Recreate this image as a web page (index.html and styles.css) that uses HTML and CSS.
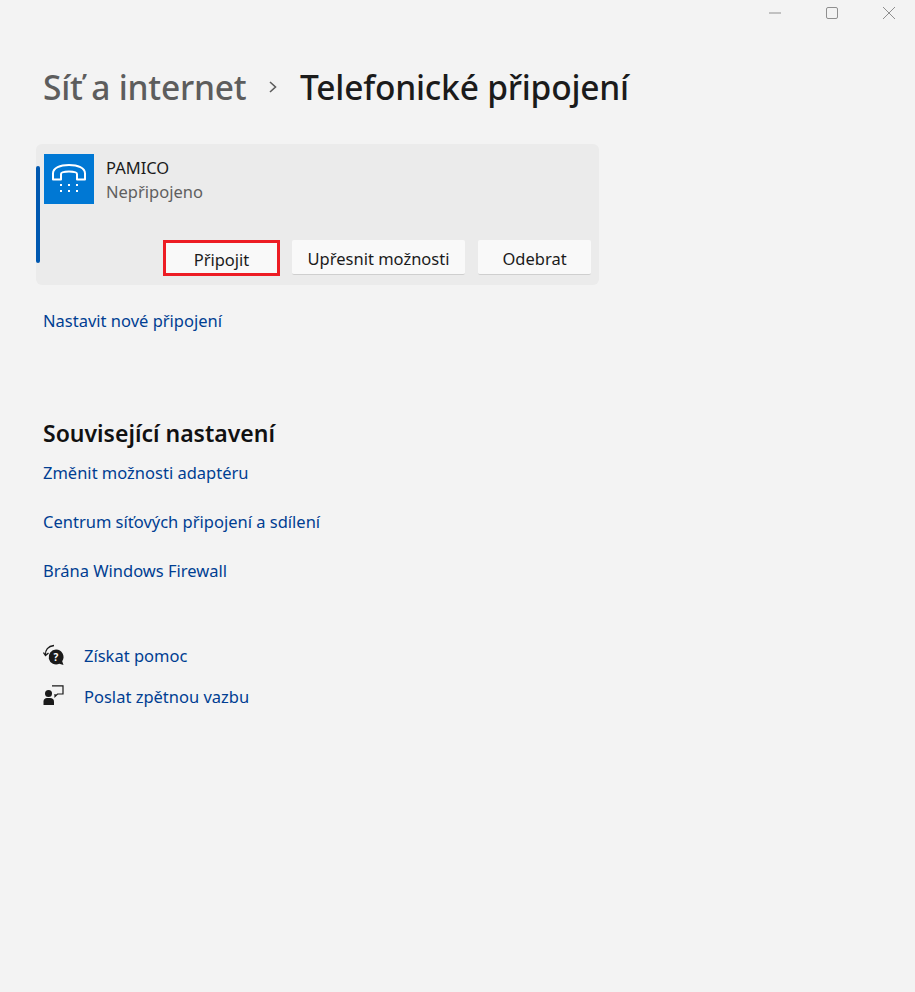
FILE: index.html
```html
<!DOCTYPE html>
<html lang="cs">
<head>
<meta charset="utf-8">
<title>Telefonické připojení</title>
<link rel="stylesheet" href="styles.css">
</head>
<body>
<div class="titlebar">
  <svg class="win-icon" width="14" height="14" viewBox="0 0 14 14"><path d="M1 7h12" stroke="#8f8f8f" fill="none"/></svg>
  <svg class="win-icon" width="14" height="14" viewBox="0 0 14 14"><rect x="1.500" y="1.500" width="11" height="11" rx="1.500" stroke="#8f8f8f" fill="none"/></svg>
  <svg class="win-icon" width="14" height="14" viewBox="0 0 14 14"><path d="M1 1l12 12M13 1L1 13" stroke="#8f8f8f" fill="none"/></svg>
</div>
<main class="page">
  <h1 class="crumbs">
    <span class="crumb-parent">Síť a internet</span>
    <svg class="crumb-sep" width="10" height="14" viewBox="0 0 10 14"><path d="M2 2l5.500 5L2 12" stroke="#5c5c5c" stroke-width="1.600" fill="none"/></svg>
    <span class="crumb-current">Telefonické připojení</span>
  </h1>
  <section class="card">
    <span class="accent"></span>
    <div class="card-head">
      <div class="tile">
        <svg width="50" height="50" viewBox="0 0 50 50">
          <path d="M9 25.500v-6C9 14 16 11 25 11s16 3 16 8.500v6h-8v-5.500c0-1.500-3-2.500-8-2.500s-8 1-8 2.500v5.500z" fill="none" stroke="#fff" stroke-width="2" stroke-linejoin="round"/>
          <g fill="#fff">
            <rect x="16" y="30" width="2" height="2"/><rect x="24" y="30" width="2" height="2"/><rect x="32" y="30" width="2" height="2"/>
            <rect x="16" y="36" width="2" height="2"/><rect x="24" y="36" width="2" height="2"/><rect x="32" y="36" width="2" height="2"/>
          </g>
        </svg>
      </div>
      <div class="card-text">
        <div class="card-name">PAMICO</div>
        <div class="card-status">Nepřipojeno</div>
      </div>
    </div>
    <div class="card-actions">
      <button class="btn btn-connect">Připojit</button>
      <button class="btn btn-advanced">Upřesnit možnosti</button>
      <button class="btn btn-remove">Odebrat</button>
    </div>
  </section>
  <a class="link new-link" href="#">Nastavit nové připojení</a>
  <h2 class="section-title">Související nastavení</h2>
  <nav class="related">
    <a class="link" href="#">Změnit možnosti adaptéru</a>
    <a class="link" href="#">Centrum síťových připojení a sdílení</a>
    <a class="link" href="#">Brána Windows Firewall</a>
  </nav>
  <div class="help">
    <div class="help-row">
      <svg class="help-icon" width="24" height="24" viewBox="0 0 24 24">
        <path d="M2.500 11C2 6 5 2 11 1.500" fill="none" stroke="#1a1a1a" stroke-width="1.300"/>
        <path d="M.5 8.500l2 3 3-2.500" fill="none" stroke="#1a1a1a" stroke-width="1.300"/>
        <path d="M13 5.500a7.500 7.500 0 1 0 3.300 14.300l4.200 1.200-1.300-3.800A7.500 7.500 0 0 0 13 5.500z" fill="#1a1a1a"/>
        <text class="help-q" x="13" y="16.500" text-anchor="middle">?</text>
      </svg>
      <a class="link" href="#">Získat pomoc</a>
    </div>
    <div class="help-row">
      <svg class="help-icon" width="24" height="24" viewBox="0 0 24 24">
        <circle cx="5.500" cy="8.500" r="3.500" fill="#1a1a1a"/>
        <path d="M.5 20v-3.500c0-2 1.500-3.500 3.500-3.500h3c2.500 0 4 1.500 4 3.500V20z" fill="#1a1a1a"/>
        <path d="M9 .8h11v8.200h-5.500l-2.500 2.500V9" fill="none" stroke="#1a1a1a" stroke-width="1.200"/>
      </svg>
      <a class="link" href="#">Poslat zpětnou vazbu</a>
    </div>
  </div>
</main>
</body>
</html>
```
FILE: styles.css
```css
* { box-sizing: border-box; }
html, body { margin: 0; height: 100%; }
body {
  background: #f3f3f3;
  color: #1b1b1b;
  font-family: "Noto Sans", "Open Sans", sans-serif;
  font-size: 16.500px;
  overflow: hidden;
}
.titlebar {
  display: flex;
  justify-content: flex-end;
  gap: 43px;
  height: 28px;
  padding: 6px 19px 0 0;
}
.win-icon { display: block; }
.page { padding: 0 0 0 36px; }
.crumbs {
  display: flex;
  align-items: center;
  height: 60px;
  margin: 29px 0 27px 7px;
  font-size: 33.500px;
  font-weight: 500;
  white-space: nowrap;
}
.crumb-parent { color: #5d5d5d; width: 225px; letter-spacing: -.2px; }
.crumb-sep { margin-right: 22px; }
.crumb-current { color: #1b1b1b; letter-spacing: -.2px; }
.card {
  position: relative;
  width: 563px;
  height: 141px;
  background: #ebebeb;
  border-radius: 6px;
  padding: 10px 8px;
}
.accent {
  position: absolute;
  left: 0;
  top: 22px;
  width: 4px;
  height: 97px;
  background: #0058b0;
  border-radius: 2px;
}
.card-head { display: flex; gap: 12px; height: 86px; }
.tile { width: 50px; height: 50px; background: #0078d4; }
.tile svg { display: block; }
.card-text { line-height: 24px; padding-top: 2px; }
.card-name { color: #1b1b1b; }
.card-status { color: #5f5f5f; }
.card-actions { display: flex; justify-content: flex-end; gap: 13px; }
.btn {
  height: 35px;
  background: #f9f9f9;
  border: 0;
  border-bottom: 1px solid #cfcfcf;
  border-radius: 2px;
  font: inherit;
  color: #1b1b1b;
  padding: 2px 0 0;
}
.btn-connect {
  width: 117px;
  height: 36px;
  margin-right: -1px;
  border: 3px solid #ed1c24;
  border-radius: 0;
}
.btn-advanced { width: 173px; }
.btn-remove { width: 113px; }
.link { display: block; color: #003e92; text-decoration: none; line-height: 24px; white-space: nowrap; }
.new-link { margin: 24px 0 0 7px; }
.section-title {
  margin: 84px 0 0 7px;
  font-size: 23px;
  line-height: 32px;
  font-weight: 600;
  color: #111;
}
.related { display: flex; flex-direction: column; gap: 25px; margin: 12px 0 0 7px; }
.help { margin: 61px 0 0 7px; display: flex; flex-direction: column; gap: 17px; }
.help-row { display: flex; align-items: center; gap: 17px; height: 24px; }
.help-icon { display: block; flex: none; }
.help-q { fill: #fff; font-size: 10px; font-weight: 700; font-family: "Noto Sans", sans-serif; }
```
